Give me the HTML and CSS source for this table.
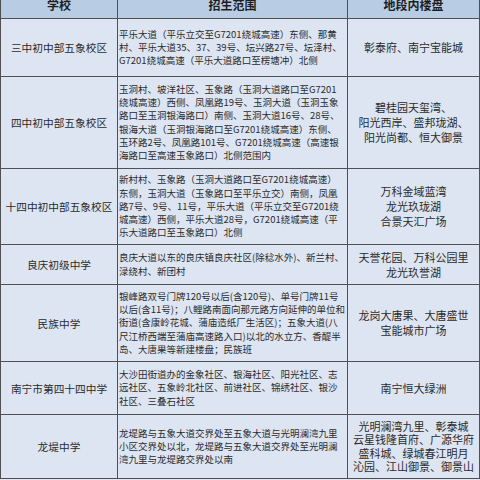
FILE: index.html
```html
<!DOCTYPE html>
<html lang="zh-CN">
<head>
<meta charset="utf-8">
<title>招生范围</title>
<link rel="stylesheet" href="styles.css">
</head>
<body>
<div class="sheet">
  <div class="cell head">学校</div>
  <div class="cell head">招生范围</div>
  <div class="cell head">地段内楼盘</div>

  <div class="cell school">三中初中部五象校区</div>
  <div class="cell range">平乐大道（平乐立交至G7201绕城高速）东侧、那黄<br>村、平乐大道35、37、39号、坛兴路27号、坛泽村、<br>G7201绕城高速（平乐大道路口至楞塘冲）北侧</div>
  <div class="cell estate">彰泰府、南宁宝能城</div>

  <div class="cell school">四中初中部五象校区</div>
  <div class="cell range">玉洞村、坡洋社区、玉象路（玉洞大道路口至G7201<br>绕城高速）西侧、凤凰路19号、玉洞大道（玉洞玉象<br>路口至玉洞银海路口）南侧、玉洞大道16号、28号、<br>银海大道（玉洞银海路口至G7201绕城高速）东侧、<br>玉环路2号、凤凰路101号、G7201绕城高速（高速银<br>海路口至高速玉象路口）北侧范围内</div>
  <div class="cell estate">碧桂园天玺湾、<br>阳光西岸、盛邦珑湖、<br>阳光尚都、恒大御景</div>

  <div class="cell school">十四中初中部五象校区</div>
  <div class="cell range">新村村、玉象路（玉洞大道路口至G7201绕城高速）<br>东侧，玉洞大道（玉象路口至平乐立交）南侧，凤凰<br>路7号、9号、11号，平乐大道（平乐立交至G7201绕<br>城高速）西侧，平乐大道28号，G7201绕城高速（平<br>乐大道路口至玉象路口）北侧</div>
  <div class="cell estate">万科金域蓝湾<br>龙光玖珑湖<br>合景天汇广场</div>

  <div class="cell school">良庆初级中学</div>
  <div class="cell range">良庆大道以东的良庆镇良庆社区(除稔水外)、新兰村、<br>渌绕村、新团村</div>
  <div class="cell estate">天誉花园、万科公园里<br>龙光玖誉湖</div>

  <div class="cell school">民族中学</div>
  <div class="cell range">银峰路双号门牌120号以后(含120号)、单号门牌11号<br>以后(含11号)；八鲤路南面向那元路方向延伸的单位和<br>街道(含康岭花城、蒲庙造纸厂生活区)；五象大道(八<br>尺江桥西端至蒲庙高速路入口)以北的水立方、香醍半<br>岛、大唐果等新建楼盘；民族班</div>
  <div class="cell estate">龙岗大唐果、大唐盛世<br>宝能城市广场</div>

  <div class="cell school">南宁市第四十四中学</div>
  <div class="cell range">大沙田街道办的金象社区、银海社区、阳光社区、志<br>远社区、五象岭北社区、前进社区、锦绣社区、银沙<br>社区、三叠石社区</div>
  <div class="cell estate">南宁恒大绿洲</div>

  <div class="cell school">龙堤中学</div>
  <div class="cell range">龙堤路与五象大道交界处至五象大道与光明澜湾九里<br>小区交界处以北，龙堤路与五象大道交界处至光明澜<br>湾九里与龙堤路交界处以南</div>
  <div class="cell estate tight">光明澜湾九里、彰泰城<br>云星钱隆首府、广源华府<br>盛科城、绿城春江明月<br>沁园、江山御景、御景山</div>
</div>
</body>
</html>
```
FILE: styles.css
```css
html, body {
  margin: 0;
  padding: 0;
  width: 480px;
  height: 480px;
  overflow: hidden;
  background: #dde5f2;
}

.sheet {
  margin-top: -10px;
  display: grid;
  grid-template-columns: 116px 229px 131px;
  grid-template-rows: 27px 57px 91px 75px 39px 76px 52px 63px;
  gap: 1px;
  padding: 1px;
  width: 480px;
  box-sizing: border-box;
  background: #505050;
  font-family: "Noto Sans CJK SC", "Microsoft YaHei", sans-serif;
  color: #2b2b2b;
}

.cell {
  background: #dde5f2;
  display: flex;
  align-items: center;
  white-space: nowrap;
  overflow: hidden;
}

.head {
  background: #b8cce4;
  justify-content: center;
  font-size: 12px;
  font-weight: bold;
  color: #1e1e1e;
}

.school {
  justify-content: center;
  text-align: center;
  font-size: 10.7px;
}

.range {
  font-size: 9.5px;
  line-height: 13.2px;
  padding-left: 1px;
}

.estate {
  justify-content: center;
  text-align: center;
  font-size: 11px;
  line-height: 15px;
}

.estate.tight {
  line-height: 13.5px;
}
```
